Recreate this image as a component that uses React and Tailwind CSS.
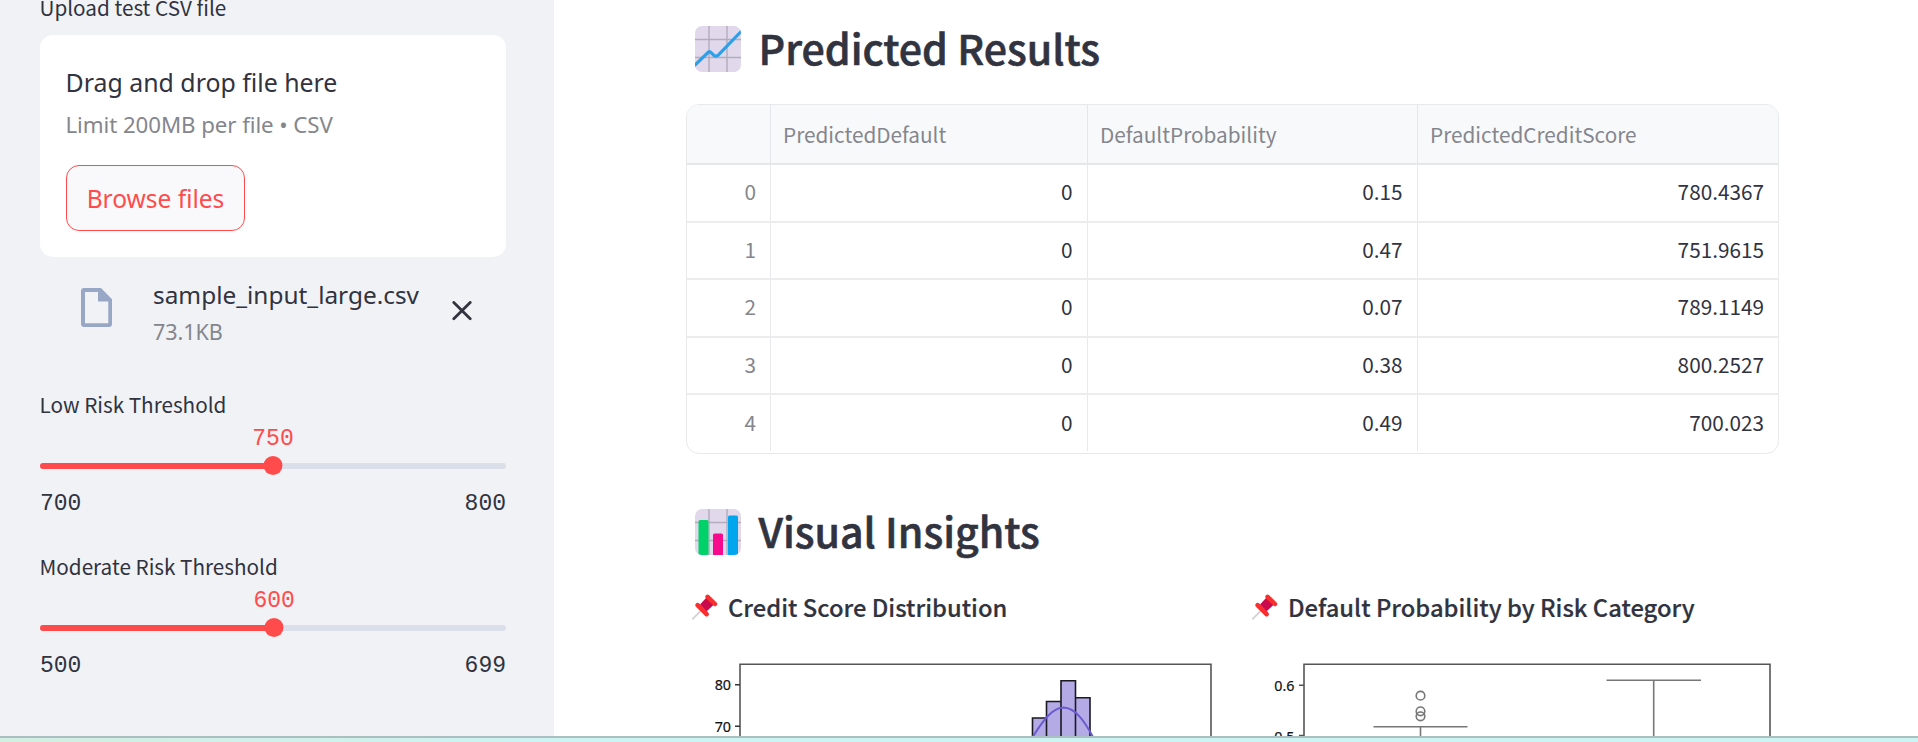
const SOURCE = 'font-["Noto_Sans_CJK_SC",sans-serif]';
const SEGOE = 'font-["Noto_Sans",sans-serif]';
const MONO = 'font-["Liberation_Mono",monospace]';

function GridTile({ children }) {
  return (
    <svg viewBox="0 0 46 46" className="h-[46px] w-[46px] shrink-0">
      <defs>
        <clipPath id="tile">
          <rect width="46" height="46" rx="7" />
        </clipPath>
      </defs>
      <g clipPath="url(#tile)">
        <rect width="46" height="46" fill="#e1d8ec" />
        <path d="M14 0V46M32 0V46M0 13.5H46M0 31.5H46" stroke="#b4acbc" strokeWidth="1.4" />
        {children}
      </g>
    </svg>
  );
}

function Pin() {
  return (
    <svg viewBox="0 0 26 26" className="h-[26px] w-[26px] shrink-0" fill="none" strokeLinecap="round">
      <path d="M0.8 24.8L10 15.5" stroke="#d3d3d3" strokeWidth="1.8" />
      <path d="M14.5 3.5L22 10.5L14.5 17.5L8 10.5Z" fill="#c90a4c" />
      <path d="M5.6 11.2L14.6 20.2" stroke="#f92f2f" strokeWidth="4.7" />
      <path d="M15.6 2.8L23 10" stroke="#f92f2f" strokeWidth="4.5" />
    </svg>
  );
}

function Slider({ label, min, max, value }) {
  const at = ((value - min) / (max - min)) * 100;
  return (
    <div className="h-[162px]">
      <div className={`${SOURCE} -ml-[0.5px] h-7 text-[20.7px] leading-7`}>{label}</div>
      <div className={`${MONO} relative mt-[45px] h-[6px] rounded-full bg-[#dadfea]`}>
        <div className="h-full rounded-full bg-[#ff4b4b]" style={{ width: `${at}%` }} />
        <div
          className="absolute -top-[37px] -translate-x-1/2 text-[23px] leading-[26px] text-[#ff4b4b]"
          style={{ left: `${at}%` }}
        >
          {value}
        </div>
        <div
          className="absolute -top-[7px] h-[19px] w-[19px] -translate-x-1/2 rounded-full bg-[#ff4b4b]"
          style={{ left: `${at}%` }}
        />
      </div>
      <div className={`${MONO} mt-[22px] flex justify-between text-[23px] leading-[26px]`}>
        <span>{min}</span>
        <span>{max}</span>
      </div>
    </div>
  );
}

function Sidebar() {
  return (
    <aside className="w-[554px] shrink-0 bg-[#f0f2f6] pl-10 pr-12">
      <div className={`${SOURCE} -ml-[0.5px] -mt-[6px] h-[41px] text-[20.7px] leading-[26px]`}>Upload test CSV file</div>
      <div className={`${SEGOE} h-[222px] rounded-[13px] bg-white pl-[26px] pt-[32px]`}>
        <div className="-ml-[0.5px] text-[24.9px] leading-[30px]">Drag and drop file here</div>
        <div className="-ml-[0.5px] mt-[14px] text-[22.3px] leading-7 tracking-[-0.08px] text-[#85868d]">
          Limit 200MB per file • CSV
        </div>
        <button className="mt-[26px] flex h-[66px] w-[179px] items-center justify-center rounded-[13px] border border-[#ff4b4b] bg-[#f9f9fb] pt-[2px] text-[24.5px] text-[#ff4b4b]">
          Browse files
        </button>
      </div>
      <div className={`${SEGOE} flex h-[133px] pt-[22px]`}>
        <svg viewBox="0 0 31 39" className="ml-[41px] mt-[9px] h-[39px] w-[31px]" fill="#98a7c6">
          <path
            fillRule="evenodd"
            d="M3 0H20L31 11.2V36a3 3 0 0 1-3 3H3a3 3 0 0 1-3-3V3a3 3 0 0 1 3-3ZM4 4V35.2H27.3V13.5H17V4Z"
          />
        </svg>
        <div className="ml-[41px] w-[287px] pt-px">
          <div className="text-[24.4px] leading-[30px]">sample_input_large.csv</div>
          <div className="mt-2 text-[21.6px] leading-7 tracking-[-0.1px] text-[#85868d]">73.1KB</div>
        </div>
        <svg viewBox="0 0 20 20" className="mt-[22px] ml-[12px] h-5 w-5" stroke="#31333f" strokeWidth="2.8" strokeLinecap="round">
          <path d="M1.8 1.4L18.2 17.8M18.2 1.4L1.8 17.8" />
        </svg>
      </div>
      <Slider label="Low Risk Threshold" min={700} max={800} value={750} />
      <Slider label="Moderate Risk Threshold" min={500} max={699} value={600} />
    </aside>
  );
}

const ROWS = [
  ['0', '0', '0.15', '780.4367'],
  ['1', '0', '0.47', '751.9615'],
  ['2', '0', '0.07', '789.1149'],
  ['3', '0', '0.38', '800.2527'],
  ['4', '0', '0.49', '700.023'],
];
const HEADS = ['', 'PredictedDefault', 'DefaultProbability', 'PredictedCreditScore'];
const GRID = 'grid grid-cols-[84px_317px_330px_1fr]';

function ResultsTable() {
  return (
    <div className="mt-[32px] h-[350px] w-[1093px] overflow-hidden rounded-[13px] border border-[#e8e9eb] text-[20.75px]">
      <div className={`${GRID} h-[60px] border-b-2 border-[#e6e7ea] bg-[#f8f9fb] text-[#85868d]`}>
        {HEADS.map((h, i) => (
          <div key={i} className={`flex items-center pl-[12px] pt-[2px] ${i < 3 ? 'border-r border-[#e6e7ea]' : ''}`}>
            {h}
          </div>
        ))}
      </div>
      {ROWS.map((row, r) => (
        <div key={r} className={`${GRID} h-[57.6px] ${r < 4 ? 'border-b-2 border-[#ececee]' : 'pb-[2px]'}`}>
          {row.map((v, i) => (
            <div
              key={i}
              className={`flex items-center justify-end pb-[2px] ${i === 1 || i === 2 ? 'pr-[14.5px]' : 'pr-[14px]'} ${i < 3 ? 'border-r border-[#e9e9eb]' : ''} ${i === 0 ? 'text-[#85868d]' : ''}`}
            >
              {v}
            </div>
          ))}
        </div>
      ))}
    </div>
  );
}

function Histogram() {
  return (
    <svg viewBox="686 650 534 86" className="h-[86px] w-[534px]" fill="none">
      <g stroke="#1b1922" strokeWidth="1.6" fill="#b4abe6">
        <path d="M1032.5 740V718H1046.5V740ZM1046.5 740V701.5H1061V740ZM1061 740V680.7H1075.5V740ZM1075.5 740V697.7H1090V740Z" />
      </g>
      <path d="M1033 736.5C1044 719 1053 707.8 1063.5 707.6C1075 708 1084 720 1093 737" stroke="#6a5acd" strokeWidth="2" />
      <path d="M740 740V664.3H1211V740" stroke="#555" strokeWidth="1.6" />
      <path d="M735 684.8H740M735 726.3H740" stroke="#333" strokeWidth="1.5" />
      <g fill="#111" stroke="#111" strokeWidth="0.2" fontFamily="Noto Sans" fontSize="14.3" textAnchor="end">
        <text x="731" y="690">80</text>
        <text x="731" y="731.5">70</text>
      </g>
    </svg>
  );
}

function BoxPlot() {
  return (
    <svg viewBox="1246 650 534 86" className="h-[86px] w-[534px]" fill="none" stroke="#777" strokeWidth="1.6">
      <path d="M1373.5 726.7H1467.5M1420.5 726.7V740M1606.5 680.3H1701M1653.7 680.3V740" />
      <circle cx="1420.5" cy="695.7" r="4.3" />
      <circle cx="1420.5" cy="711.3" r="4.3" />
      <circle cx="1420.5" cy="716.3" r="4.3" />
      <path d="M1304 740V664.3H1770V740M1299 685.3H1304M1299 735.6H1304" stroke="#555" />
      <g fill="#111" stroke="#111" strokeWidth="0.2" fontFamily="Noto Sans" fontSize="14.3" textAnchor="end">
        <text x="1294.5" y="690.5">0.6</text>
        <text x="1294.5" y="742">0.5</text>
      </g>
    </svg>
  );
}

function ChartPanel({ title, children }) {
  return (
    <section className="w-[560px]">
      <h3 className="flex h-[34px] items-center gap-[10.5px] pl-[5.5px] text-[23.75px] font-medium leading-[34px] [-webkit-text-stroke:0.2px]">
        <Pin />
        <span className="whitespace-nowrap">{title}</span>
      </h3>
      <div className="mt-[26px]">{children}</div>
    </section>
  );
}

export default function App() {
  return (
    <div className="flex h-[742px] w-[1918px] flex-col overflow-hidden bg-white text-[#31333f]">
      <div className="flex h-[736px] overflow-hidden">
        <Sidebar />
        <main className={`${SOURCE} pl-[132px] pt-[26px]`}>
          <h2 className="flex h-[46px] items-center gap-[17px] pl-[9px] text-[41.1px] font-medium leading-[46px] [-webkit-text-stroke:0.6px]">
            <GridTile>
              <path d="M-2 41L13.5 26Q14.5 25.3 15.5 26.2L19 29.5Q21 31 23 29.3L47 4.5" fill="none" stroke="#2f9fe8" strokeWidth="3.2" />
            </GridTile>
            <span className="-mt-[4px] ml-[0.5px]">Predicted Results</span>
          </h2>
          <ResultsTable />
          <h2 className="mt-[55px] flex h-[46px] items-center gap-[17px] pl-[9px] text-[41.1px] font-medium leading-[46px] [-webkit-text-stroke:0.6px]">
            <GridTile>
              <rect x="3.5" y="11" width="10" height="35" rx="1.5" fill="#00d26a" />
              <rect x="18" y="24.5" width="10" height="22" rx="1.5" fill="#f70a8d" />
              <rect x="33" y="6.5" width="10" height="40" rx="1.5" fill="#00a6ed" />
            </GridTile>
            <span className="-mt-[4px] ml-[0.5px]">Visual Insights</span>
          </h2>
          <div className="mt-[35px] flex">
            <ChartPanel title="Credit Score Distribution">
              <Histogram />
            </ChartPanel>
            <ChartPanel title="Default Probability by Risk Category">
              <BoxPlot />
            </ChartPanel>
          </div>
        </main>
      </div>
      <div className="h-[6px] border-t-2 border-[#a9bfc0] bg-linear-to-r from-[#d3eee2] via-[#cdf3f3] via-30% to-[#cdf3f3]" />
    </div>
  );
}
